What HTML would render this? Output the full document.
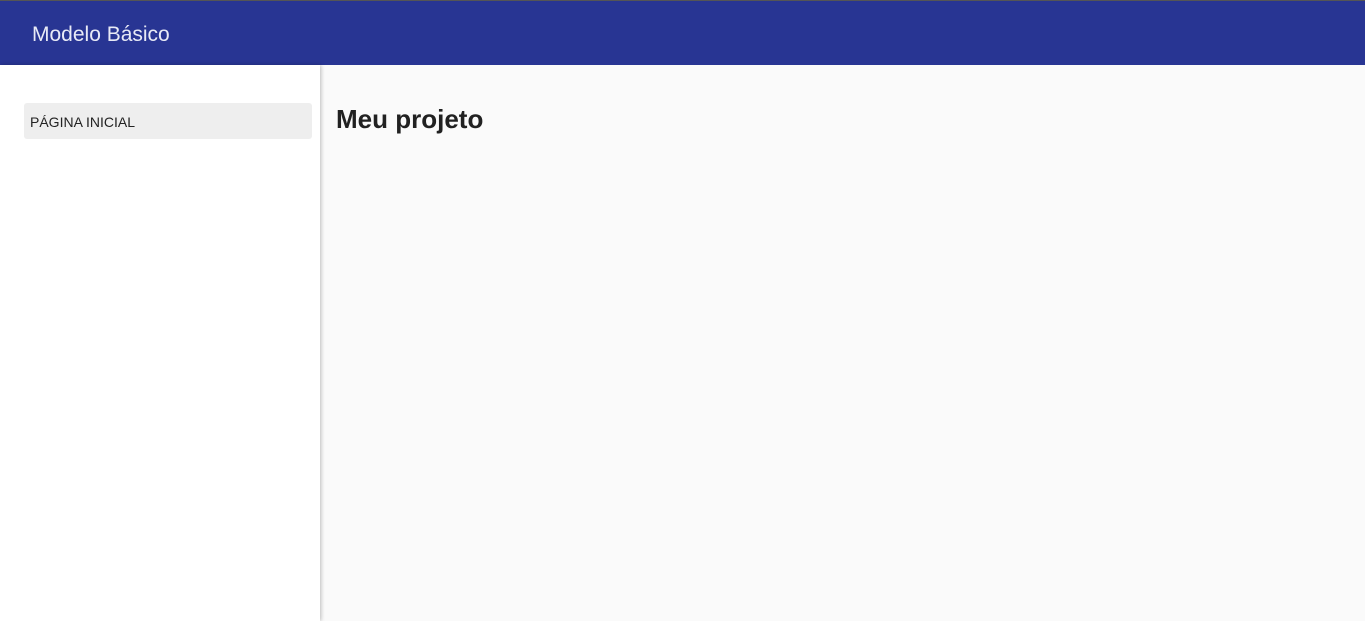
<!DOCTYPE html>
<html><head><meta charset="utf-8"><style>
*{margin:0;padding:0;box-sizing:border-box}
body{width:1365px;height:621px;overflow:hidden;background:#fafafa;font-family:"Liberation Sans",sans-serif;position:relative}
.top{position:absolute;top:0;left:0;width:1365px;height:65px;background:#283593;border-top:1px solid #555}
.top span{position:absolute;left:32px;top:22px;font-size:21px;color:#e8eaf6}
.side{position:absolute;top:65px;left:0;width:320px;height:556px;background:#fff;box-shadow:1px 0 4px rgba(0,0,0,.25)}
.item{position:absolute;left:24px;top:38px;width:288px;height:36px;background:#eee;border-radius:3px;font-size:14px;color:#222;padding:11px 0 0 6px}
h1{position:absolute;left:336px;top:104px;font-size:26px;font-weight:bold;color:#212121}
</style></head><body>
<div class="top"><span>Modelo Básico</span></div>
<div class="side"><div class="item">PÁGINA INICIAL</div></div>
<h1>Meu projeto</h1>
</body></html>
